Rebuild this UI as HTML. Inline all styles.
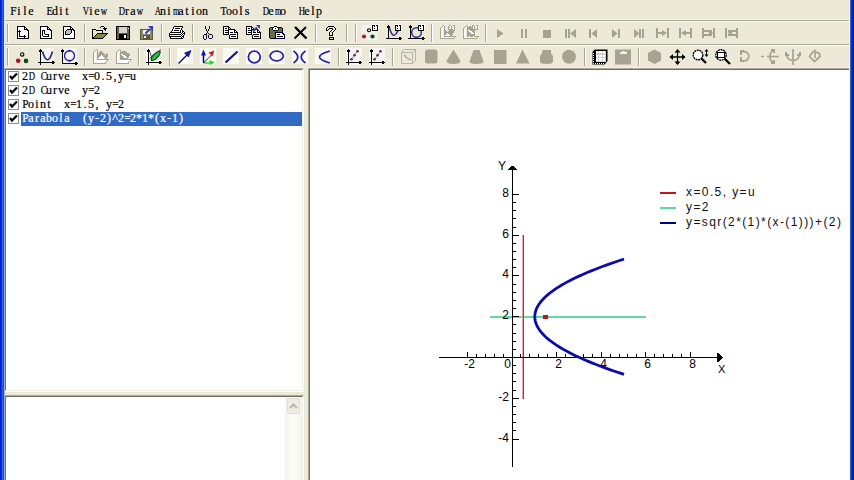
<!DOCTYPE html>
<html><head><meta charset="utf-8"><style>
*{margin:0;padding:0;box-sizing:border-box}
html,body{width:854px;height:480px;overflow:hidden;background:#ECE9D8}
.a{position:absolute}
.mi{position:absolute;top:5px;font-family:"Liberation Mono",monospace;font-size:12px;letter-spacing:-1.2px;line-height:14px;color:#000;white-space:pre}
.tt{position:absolute;font-family:"Liberation Mono",monospace;font-size:12px;letter-spacing:-1.2px;line-height:14px;white-space:pre;height:14px}
.ch{position:absolute;width:6px;text-align:center;font-family:"Liberation Serif",serif;font-size:12px;line-height:14px;white-space:pre;-webkit-text-stroke:0.2px currentColor}
.cb{position:absolute;width:11px;height:11px;border:1px solid #8E8F8F;background:#fff}
.cb svg{position:absolute;left:-1px;top:-1px}
</style></head><body>
<span class="ch" style="left:10px;top:4px;color:#000;transform:scaleX(0.944)">F</span><span class="ch" style="left:16px;top:4px;color:#000">i</span><span class="ch" style="left:22px;top:4px;color:#000">l</span><span class="ch" style="left:28px;top:4px;color:#000">e</span>
<span class="ch" style="left:46px;top:4px;color:#000;transform:scaleX(0.859)">E</span><span class="ch" style="left:52px;top:4px;color:#000">d</span><span class="ch" style="left:58px;top:4px;color:#000">i</span><span class="ch" style="left:64px;top:4px;color:#000">t</span>
<span class="ch" style="left:82px;top:4px;color:#000;transform:scaleX(0.727)">V</span><span class="ch" style="left:88px;top:4px;color:#000">i</span><span class="ch" style="left:94px;top:4px;color:#000">e</span><span class="ch" style="left:100px;top:4px;color:#000;transform:scaleX(0.727)">w</span>
<span class="ch" style="left:118px;top:4px;color:#000;transform:scaleX(0.727)">D</span><span class="ch" style="left:124px;top:4px;color:#000">r</span><span class="ch" style="left:130px;top:4px;color:#000">a</span><span class="ch" style="left:136px;top:4px;color:#000;transform:scaleX(0.727)">w</span>
<span class="ch" style="left:154px;top:4px;color:#000;transform:scaleX(0.727)">A</span><span class="ch" style="left:160px;top:4px;color:#000">n</span><span class="ch" style="left:166px;top:4px;color:#000">i</span><span class="ch" style="left:172px;top:4px;color:#000;transform:scaleX(0.675)">m</span><span class="ch" style="left:178px;top:4px;color:#000">a</span><span class="ch" style="left:184px;top:4px;color:#000">t</span><span class="ch" style="left:190px;top:4px;color:#000">i</span><span class="ch" style="left:196px;top:4px;color:#000">o</span><span class="ch" style="left:202px;top:4px;color:#000">n</span>
<span class="ch" style="left:220px;top:4px;color:#000;transform:scaleX(0.859)">T</span><span class="ch" style="left:226px;top:4px;color:#000">o</span><span class="ch" style="left:232px;top:4px;color:#000">o</span><span class="ch" style="left:238px;top:4px;color:#000">l</span><span class="ch" style="left:244px;top:4px;color:#000">s</span>
<span class="ch" style="left:262px;top:4px;color:#000;transform:scaleX(0.727)">D</span><span class="ch" style="left:268px;top:4px;color:#000">e</span><span class="ch" style="left:274px;top:4px;color:#000;transform:scaleX(0.675)">m</span><span class="ch" style="left:280px;top:4px;color:#000">o</span>
<span class="ch" style="left:298px;top:4px;color:#000;transform:scaleX(0.727)">H</span><span class="ch" style="left:304px;top:4px;color:#000">e</span><span class="ch" style="left:310px;top:4px;color:#000">l</span><span class="ch" style="left:316px;top:4px;color:#000">p</span>
<svg class="a" style="left:0;top:0" width="854" height="70" viewBox="0 0 854 70">
<rect x="4" y="19" width="846" height="1" fill="#F6F4EC"/>
<rect x="4" y="20" width="846" height="1" fill="#ACA899"/>
<rect x="4" y="21" width="846" height="1" fill="#FFFFFF"/>
<rect x="4" y="44" width="846" height="1" fill="#ACA899"/>
<rect x="4" y="45" width="846" height="1" fill="#FFFFFF"/>
<rect x="4" y="67" width="846" height="1" fill="#F3F1E8" shape-rendering="crispEdges"/>
<rect x="7" y="24" width="1" height="18" fill="#ACA899" shape-rendering="crispEdges"/><rect x="8" y="24" width="1" height="18" fill="#FFFFFF"/>
<rect x="84" y="24" width="1" height="18" fill="#ACA899" shape-rendering="crispEdges"/><rect x="85" y="24" width="1" height="18" fill="#FFFFFF"/>
<rect x="161" y="24" width="1" height="18" fill="#ACA899" shape-rendering="crispEdges"/><rect x="162" y="24" width="1" height="18" fill="#FFFFFF"/>
<rect x="192" y="24" width="1" height="18" fill="#ACA899" shape-rendering="crispEdges"/><rect x="193" y="24" width="1" height="18" fill="#FFFFFF"/>
<rect x="315" y="24" width="1" height="18" fill="#ACA899" shape-rendering="crispEdges"/><rect x="316" y="24" width="1" height="18" fill="#FFFFFF"/>
<rect x="346" y="24" width="1" height="18" fill="#ACA899" shape-rendering="crispEdges"/><rect x="347" y="24" width="1" height="18" fill="#FFFFFF"/>
<rect x="355" y="24" width="1" height="18" fill="#ACA899" shape-rendering="crispEdges"/><rect x="356" y="24" width="1" height="18" fill="#FFFFFF"/>
<rect x="431" y="24" width="1" height="18" fill="#ACA899" shape-rendering="crispEdges"/><rect x="432" y="24" width="1" height="18" fill="#FFFFFF"/>
<rect x="485" y="24" width="1" height="18" fill="#ACA899" shape-rendering="crispEdges"/><rect x="486" y="24" width="1" height="18" fill="#FFFFFF"/>
<rect x="7" y="48" width="1" height="18" fill="#ACA899" shape-rendering="crispEdges"/><rect x="8" y="48" width="1" height="18" fill="#FFFFFF"/>
<rect x="84" y="48" width="1" height="18" fill="#ACA899" shape-rendering="crispEdges"/><rect x="85" y="48" width="1" height="18" fill="#FFFFFF"/>
<rect x="138" y="48" width="1" height="18" fill="#ACA899" shape-rendering="crispEdges"/><rect x="139" y="48" width="1" height="18" fill="#FFFFFF"/>
<rect x="169" y="48" width="1" height="18" fill="#ACA899" shape-rendering="crispEdges"/><rect x="170" y="48" width="1" height="18" fill="#FFFFFF"/>
<rect x="338" y="48" width="1" height="18" fill="#ACA899" shape-rendering="crispEdges"/><rect x="339" y="48" width="1" height="18" fill="#FFFFFF"/>
<rect x="392" y="48" width="1" height="18" fill="#ACA899" shape-rendering="crispEdges"/><rect x="393" y="48" width="1" height="18" fill="#FFFFFF"/>
<rect x="584" y="48" width="1" height="18" fill="#ACA899" shape-rendering="crispEdges"/><rect x="585" y="48" width="1" height="18" fill="#FFFFFF"/>
<rect x="638" y="48" width="1" height="18" fill="#ACA899" shape-rendering="crispEdges"/><rect x="639" y="48" width="1" height="18" fill="#FFFFFF"/>
<g shape-rendering="crispEdges"><rect x="17" y="26" width="8" height="1" fill="#000"/><rect x="17" y="27" width="1" height="1" fill="#000"/><rect x="18" y="27" width="6" height="1" fill="#fff"/><rect x="24" y="27" width="2" height="1" fill="#000"/><rect x="17" y="28" width="1" height="1" fill="#000"/><rect x="18" y="28" width="6" height="1" fill="#fff"/><rect x="24" y="28" width="1" height="1" fill="#000"/><rect x="25" y="28" width="1" height="1" fill="#fff"/><rect x="26" y="28" width="1" height="1" fill="#000"/><rect x="17" y="29" width="1" height="1" fill="#000"/><rect x="18" y="29" width="6" height="1" fill="#fff"/><rect x="24" y="29" width="4" height="1" fill="#000"/><rect x="17" y="30" width="1" height="1" fill="#000"/><rect x="18" y="30" width="9" height="1" fill="#fff"/><rect x="27" y="30" width="2" height="1" fill="#000"/><rect x="17" y="31" width="1" height="1" fill="#000"/><rect x="18" y="31" width="10" height="1" fill="#fff"/><rect x="28" y="31" width="1" height="1" fill="#000"/><rect x="17" y="32" width="1" height="1" fill="#000"/><rect x="18" y="32" width="10" height="1" fill="#fff"/><rect x="28" y="32" width="1" height="1" fill="#000"/><rect x="17" y="33" width="1" height="1" fill="#000"/><rect x="18" y="33" width="10" height="1" fill="#fff"/><rect x="28" y="33" width="1" height="1" fill="#000"/><rect x="17" y="34" width="1" height="1" fill="#000"/><rect x="18" y="34" width="10" height="1" fill="#fff"/><rect x="28" y="34" width="1" height="1" fill="#000"/><rect x="17" y="35" width="1" height="1" fill="#000"/><rect x="18" y="35" width="10" height="1" fill="#fff"/><rect x="28" y="35" width="1" height="1" fill="#000"/><rect x="17" y="36" width="1" height="1" fill="#000"/><rect x="18" y="36" width="10" height="1" fill="#fff"/><rect x="28" y="36" width="1" height="1" fill="#000"/><rect x="17" y="37" width="1" height="1" fill="#000"/><rect x="18" y="37" width="10" height="1" fill="#fff"/><rect x="28" y="37" width="1" height="1" fill="#000"/><rect x="17" y="38" width="12" height="1" fill="#000"/></g>
<g shape-rendering="crispEdges"><rect x="40" y="26" width="8" height="1" fill="#000"/><rect x="40" y="27" width="1" height="1" fill="#000"/><rect x="41" y="27" width="6" height="1" fill="#fff"/><rect x="47" y="27" width="2" height="1" fill="#000"/><rect x="40" y="28" width="1" height="1" fill="#000"/><rect x="41" y="28" width="6" height="1" fill="#fff"/><rect x="47" y="28" width="1" height="1" fill="#000"/><rect x="48" y="28" width="1" height="1" fill="#fff"/><rect x="49" y="28" width="1" height="1" fill="#000"/><rect x="40" y="29" width="1" height="1" fill="#000"/><rect x="41" y="29" width="6" height="1" fill="#fff"/><rect x="47" y="29" width="4" height="1" fill="#000"/><rect x="40" y="30" width="1" height="1" fill="#000"/><rect x="41" y="30" width="9" height="1" fill="#fff"/><rect x="50" y="30" width="2" height="1" fill="#000"/><rect x="40" y="31" width="1" height="1" fill="#000"/><rect x="41" y="31" width="10" height="1" fill="#fff"/><rect x="51" y="31" width="1" height="1" fill="#000"/><rect x="40" y="32" width="1" height="1" fill="#000"/><rect x="41" y="32" width="10" height="1" fill="#fff"/><rect x="51" y="32" width="1" height="1" fill="#000"/><rect x="40" y="33" width="1" height="1" fill="#000"/><rect x="41" y="33" width="10" height="1" fill="#fff"/><rect x="51" y="33" width="1" height="1" fill="#000"/><rect x="40" y="34" width="1" height="1" fill="#000"/><rect x="41" y="34" width="10" height="1" fill="#fff"/><rect x="51" y="34" width="1" height="1" fill="#000"/><rect x="40" y="35" width="1" height="1" fill="#000"/><rect x="41" y="35" width="10" height="1" fill="#fff"/><rect x="51" y="35" width="1" height="1" fill="#000"/><rect x="40" y="36" width="1" height="1" fill="#000"/><rect x="41" y="36" width="10" height="1" fill="#fff"/><rect x="51" y="36" width="1" height="1" fill="#000"/><rect x="40" y="37" width="1" height="1" fill="#000"/><rect x="41" y="37" width="10" height="1" fill="#fff"/><rect x="51" y="37" width="1" height="1" fill="#000"/><rect x="40" y="38" width="12" height="1" fill="#000"/></g>
<g shape-rendering="crispEdges"><rect x="63" y="26" width="8" height="1" fill="#000"/><rect x="63" y="27" width="1" height="1" fill="#000"/><rect x="64" y="27" width="6" height="1" fill="#fff"/><rect x="70" y="27" width="2" height="1" fill="#000"/><rect x="63" y="28" width="1" height="1" fill="#000"/><rect x="64" y="28" width="6" height="1" fill="#fff"/><rect x="70" y="28" width="1" height="1" fill="#000"/><rect x="71" y="28" width="1" height="1" fill="#fff"/><rect x="72" y="28" width="1" height="1" fill="#000"/><rect x="63" y="29" width="1" height="1" fill="#000"/><rect x="64" y="29" width="6" height="1" fill="#fff"/><rect x="70" y="29" width="4" height="1" fill="#000"/><rect x="63" y="30" width="1" height="1" fill="#000"/><rect x="64" y="30" width="9" height="1" fill="#fff"/><rect x="73" y="30" width="2" height="1" fill="#000"/><rect x="63" y="31" width="1" height="1" fill="#000"/><rect x="64" y="31" width="10" height="1" fill="#fff"/><rect x="74" y="31" width="1" height="1" fill="#000"/><rect x="63" y="32" width="1" height="1" fill="#000"/><rect x="64" y="32" width="10" height="1" fill="#fff"/><rect x="74" y="32" width="1" height="1" fill="#000"/><rect x="63" y="33" width="1" height="1" fill="#000"/><rect x="64" y="33" width="10" height="1" fill="#fff"/><rect x="74" y="33" width="1" height="1" fill="#000"/><rect x="63" y="34" width="1" height="1" fill="#000"/><rect x="64" y="34" width="10" height="1" fill="#fff"/><rect x="74" y="34" width="1" height="1" fill="#000"/><rect x="63" y="35" width="1" height="1" fill="#000"/><rect x="64" y="35" width="10" height="1" fill="#fff"/><rect x="74" y="35" width="1" height="1" fill="#000"/><rect x="63" y="36" width="1" height="1" fill="#000"/><rect x="64" y="36" width="10" height="1" fill="#fff"/><rect x="74" y="36" width="1" height="1" fill="#000"/><rect x="63" y="37" width="1" height="1" fill="#000"/><rect x="64" y="37" width="10" height="1" fill="#fff"/><rect x="74" y="37" width="1" height="1" fill="#000"/><rect x="63" y="38" width="12" height="1" fill="#000"/></g>
<g shape-rendering="crispEdges"><rect x="19" y="30" width="1" height="1" fill="#000"/><rect x="18" y="31" width="3" height="1" fill="#000"/><rect x="19" y="32" width="1" height="1" fill="#000"/><rect x="19" y="33" width="1" height="1" fill="#000"/><rect x="19" y="34" width="1" height="1" fill="#000"/><rect x="19" y="35" width="1" height="1" fill="#000"/><rect x="24" y="35" width="1" height="1" fill="#000"/><rect x="19" y="36" width="7" height="1" fill="#000"/><rect x="24" y="37" width="1" height="1" fill="#000"/></g>
<g shape-rendering="crispEdges"><rect x="42" y="30" width="3" height="1" fill="#000"/><rect x="42" y="31" width="1" height="1" fill="#000"/><rect x="43" y="31" width="1" height="1" fill="#fff"/><rect x="44" y="31" width="1" height="1" fill="#000"/><rect x="42" y="32" width="1" height="1" fill="#000"/><rect x="43" y="32" width="1" height="1" fill="#fff"/><rect x="44" y="32" width="1" height="1" fill="#000"/><rect x="42" y="33" width="1" height="1" fill="#000"/><rect x="43" y="33" width="1" height="1" fill="#fff"/><rect x="44" y="33" width="1" height="1" fill="#000"/><rect x="42" y="34" width="1" height="1" fill="#000"/><rect x="43" y="34" width="2" height="1" fill="#fff"/><rect x="45" y="34" width="4" height="1" fill="#000"/><rect x="42" y="35" width="1" height="1" fill="#000"/><rect x="43" y="35" width="5" height="1" fill="#fff"/><rect x="48" y="35" width="1" height="1" fill="#000"/><rect x="43" y="36" width="6" height="1" fill="#000"/></g>
<g shape-rendering="crispEdges"><rect x="67" y="29" width="5" height="1" fill="#000"/><rect x="66" y="30" width="1" height="1" fill="#000"/><rect x="67" y="30" width="4" height="1" fill="#BDBDBD"/><rect x="71" y="30" width="1" height="1" fill="#000"/><rect x="65" y="31" width="1" height="1" fill="#000"/><rect x="66" y="31" width="5" height="1" fill="#BDBDBD"/><rect x="71" y="31" width="1" height="1" fill="#000"/><rect x="65" y="32" width="1" height="1" fill="#000"/><rect x="66" y="32" width="5" height="1" fill="#BDBDBD"/><rect x="71" y="32" width="1" height="1" fill="#000"/><rect x="65" y="33" width="1" height="1" fill="#000"/><rect x="66" y="33" width="4" height="1" fill="#BDBDBD"/><rect x="70" y="33" width="1" height="1" fill="#000"/><rect x="65" y="34" width="5" height="1" fill="#000"/></g>
<g shape-rendering="crispEdges"><rect x="101" y="26" width="3" height="1" fill="#000"/><rect x="100" y="27" width="1" height="1" fill="#000"/><rect x="104" y="27" width="1" height="1" fill="#000"/><rect x="103" y="28" width="4" height="1" fill="#000"/><rect x="92" y="29" width="4" height="1" fill="#000"/><rect x="104" y="29" width="2" height="1" fill="#000"/><rect x="92" y="30" width="1" height="1" fill="#000"/><rect x="93" y="30" width="3" height="1" fill="#EEF2A8"/><rect x="96" y="30" width="7" height="1" fill="#000"/><rect x="105" y="30" width="1" height="1" fill="#000"/><rect x="92" y="31" width="1" height="1" fill="#000"/><rect x="93" y="31" width="9" height="1" fill="#EEF2A8"/><rect x="102" y="31" width="1" height="1" fill="#000"/><rect x="92" y="32" width="1" height="1" fill="#000"/><rect x="93" y="32" width="9" height="1" fill="#EEF2A8"/><rect x="102" y="32" width="1" height="1" fill="#000"/><rect x="92" y="33" width="1" height="1" fill="#000"/><rect x="93" y="33" width="4" height="1" fill="#EEF2A8"/><rect x="97" y="33" width="11" height="1" fill="#000"/><rect x="92" y="34" width="1" height="1" fill="#000"/><rect x="93" y="34" width="3" height="1" fill="#EEF2A8"/><rect x="96" y="34" width="1" height="1" fill="#000"/><rect x="97" y="34" width="9" height="1" fill="#868A34"/><rect x="106" y="34" width="1" height="1" fill="#000"/><rect x="92" y="35" width="1" height="1" fill="#000"/><rect x="93" y="35" width="2" height="1" fill="#EEF2A8"/><rect x="95" y="35" width="1" height="1" fill="#000"/><rect x="96" y="35" width="9" height="1" fill="#868A34"/><rect x="105" y="35" width="1" height="1" fill="#000"/><rect x="92" y="36" width="1" height="1" fill="#000"/><rect x="93" y="36" width="1" height="1" fill="#EEF2A8"/><rect x="94" y="36" width="1" height="1" fill="#000"/><rect x="95" y="36" width="9" height="1" fill="#868A34"/><rect x="104" y="36" width="1" height="1" fill="#000"/><rect x="92" y="37" width="2" height="1" fill="#000"/><rect x="94" y="37" width="9" height="1" fill="#868A34"/><rect x="103" y="37" width="1" height="1" fill="#000"/><rect x="92" y="38" width="11" height="1" fill="#000"/></g>
<g shape-rendering="crispEdges"><rect x="116" y="26" width="14" height="14" fill="#000"/><rect x="117" y="27" width="12" height="12" fill="#60604A"/><rect x="119" y="27" width="8" height="6" fill="#D4D4CC"/><rect x="119" y="34" width="8" height="5" fill="#000"/><rect x="124" y="35" width="2" height="3" fill="#fff"/><rect x="128" y="28" width="1" height="1" fill="#fff"/></g>
<g shape-rendering="crispEdges"><rect x="140" y="29" width="13" height="11" fill="#5A5A40"/><rect x="141" y="30" width="11" height="9" fill="#8A8A68"/><rect x="143" y="30" width="7" height="4" fill="#F4F4F4"/><rect x="143" y="35" width="7" height="4" fill="#5A5A40"/><rect x="144" y="36" width="2" height="2" fill="#fff"/></g>
<path d="M145.5,33.5 L150,29" stroke="#3434B8" stroke-width="2"/><path d="M148,26 H153 V31 Z" fill="#3434B8"/>
<g shape-rendering="crispEdges"><rect x="174" y="26" width="9" height="1" fill="#000"/><rect x="173" y="27" width="1" height="1" fill="#000"/><rect x="174" y="27" width="8" height="1" fill="#FFFFFF"/><rect x="182" y="27" width="1" height="1" fill="#000"/><rect x="173" y="28" width="1" height="1" fill="#000"/><rect x="174" y="28" width="1" height="1" fill="#FFFFFF"/><rect x="175" y="28" width="5" height="1" fill="#000"/><rect x="180" y="28" width="1" height="1" fill="#FFFFFF"/><rect x="181" y="28" width="1" height="1" fill="#000"/><rect x="172" y="29" width="1" height="1" fill="#000"/><rect x="173" y="29" width="8" height="1" fill="#FFFFFF"/><rect x="181" y="29" width="1" height="1" fill="#000"/><rect x="172" y="30" width="1" height="1" fill="#000"/><rect x="173" y="30" width="1" height="1" fill="#FFFFFF"/><rect x="174" y="30" width="5" height="1" fill="#000"/><rect x="179" y="30" width="1" height="1" fill="#FFFFFF"/><rect x="180" y="30" width="1" height="1" fill="#000"/><rect x="181" y="30" width="1" height="1" fill="#FFFFFF"/><rect x="182" y="30" width="1" height="1" fill="#000"/><rect x="171" y="31" width="1" height="1" fill="#000"/><rect x="172" y="31" width="8" height="1" fill="#FFFFFF"/><rect x="180" y="31" width="1" height="1" fill="#000"/><rect x="181" y="31" width="1" height="1" fill="#FFFFFF"/><rect x="182" y="31" width="2" height="1" fill="#000"/><rect x="170" y="32" width="11" height="1" fill="#000"/><rect x="181" y="32" width="1" height="1" fill="#FFFFFF"/><rect x="182" y="32" width="1" height="1" fill="#000"/><rect x="183" y="32" width="1" height="1" fill="#FFFFFF"/><rect x="184" y="32" width="1" height="1" fill="#000"/><rect x="169" y="33" width="1" height="1" fill="#000"/><rect x="170" y="33" width="11" height="1" fill="#FFFFFF"/><rect x="181" y="33" width="1" height="1" fill="#000"/><rect x="182" y="33" width="1" height="1" fill="#FFFFFF"/><rect x="183" y="33" width="2" height="1" fill="#000"/><rect x="169" y="34" width="12" height="1" fill="#000"/><rect x="181" y="34" width="1" height="1" fill="#FFFFFF"/><rect x="182" y="34" width="1" height="1" fill="#000"/><rect x="183" y="34" width="1" height="1" fill="#FFFFFF"/><rect x="184" y="34" width="1" height="1" fill="#000"/><rect x="169" y="35" width="1" height="1" fill="#000"/><rect x="170" y="35" width="11" height="1" fill="#FFFFFF"/><rect x="181" y="35" width="1" height="1" fill="#000"/><rect x="182" y="35" width="1" height="1" fill="#FFFFFF"/><rect x="183" y="35" width="1" height="1" fill="#000"/><rect x="169" y="36" width="12" height="1" fill="#000"/><rect x="181" y="36" width="1" height="1" fill="#FFFFFF"/><rect x="182" y="36" width="2" height="1" fill="#000"/><rect x="170" y="37" width="1" height="1" fill="#000"/><rect x="171" y="37" width="10" height="1" fill="#FFFFFF"/><rect x="181" y="37" width="1" height="1" fill="#000"/><rect x="182" y="37" width="1" height="1" fill="#FFFFFF"/><rect x="183" y="37" width="1" height="1" fill="#000"/><rect x="170" y="38" width="13" height="1" fill="#000"/></g>
<g shape-rendering="crispEdges"><rect x="205" y="26" width="1" height="1" fill="#000"/><rect x="209" y="26" width="1" height="1" fill="#000"/><rect x="205" y="27" width="1" height="1" fill="#000"/><rect x="209" y="27" width="1" height="1" fill="#000"/><rect x="205" y="28" width="1" height="1" fill="#000"/><rect x="209" y="28" width="1" height="1" fill="#000"/><rect x="206" y="29" width="1" height="1" fill="#000"/><rect x="208" y="29" width="1" height="1" fill="#000"/><rect x="206" y="30" width="1" height="1" fill="#000"/><rect x="208" y="30" width="1" height="1" fill="#000"/><rect x="207" y="31" width="1" height="1" fill="#000"/><rect x="207" y="32" width="1" height="1" fill="#000"/><rect x="206" y="33" width="1" height="1" fill="#000"/><rect x="208" y="33" width="1" height="1" fill="#000"/><rect x="204" y="34" width="2" height="1" fill="#10104A"/><rect x="206" y="34" width="1" height="1" fill="#000"/><rect x="209" y="34" width="3" height="1" fill="#10104A"/><rect x="203" y="35" width="1" height="1" fill="#10104A"/><rect x="206" y="35" width="1" height="1" fill="#10104A"/><rect x="208" y="35" width="1" height="1" fill="#10104A"/><rect x="212" y="35" width="1" height="1" fill="#10104A"/><rect x="203" y="36" width="1" height="1" fill="#10104A"/><rect x="206" y="36" width="1" height="1" fill="#10104A"/><rect x="208" y="36" width="1" height="1" fill="#10104A"/><rect x="212" y="36" width="1" height="1" fill="#10104A"/><rect x="203" y="37" width="1" height="1" fill="#10104A"/><rect x="206" y="37" width="1" height="1" fill="#10104A"/><rect x="208" y="37" width="1" height="1" fill="#10104A"/><rect x="212" y="37" width="1" height="1" fill="#10104A"/><rect x="203" y="38" width="1" height="1" fill="#10104A"/><rect x="206" y="38" width="1" height="1" fill="#10104A"/><rect x="209" y="38" width="3" height="1" fill="#10104A"/><rect x="204" y="39" width="2" height="1" fill="#10104A"/></g>
<g shape-rendering="crispEdges"><rect x="223" y="26" width="6" height="1" fill="#000"/><rect x="223" y="27" width="1" height="1" fill="#000"/><rect x="224" y="27" width="4" height="1" fill="#FFFFFF"/><rect x="228" y="27" width="2" height="1" fill="#000"/><rect x="223" y="28" width="1" height="1" fill="#000"/><rect x="224" y="28" width="1" height="1" fill="#FFFFFF"/><rect x="225" y="28" width="2" height="1" fill="#000"/><rect x="227" y="28" width="1" height="1" fill="#FFFFFF"/><rect x="228" y="28" width="1" height="1" fill="#000"/><rect x="229" y="28" width="1" height="1" fill="#FFFFFF"/><rect x="230" y="28" width="1" height="1" fill="#000"/><rect x="223" y="29" width="1" height="1" fill="#000"/><rect x="224" y="29" width="4" height="1" fill="#FFFFFF"/><rect x="228" y="29" width="7" height="1" fill="#000"/><rect x="223" y="30" width="1" height="1" fill="#000"/><rect x="224" y="30" width="1" height="1" fill="#FFFFFF"/><rect x="225" y="30" width="4" height="1" fill="#000"/><rect x="229" y="30" width="5" height="1" fill="#FFFFFF"/><rect x="234" y="30" width="2" height="1" fill="#000"/><rect x="223" y="31" width="1" height="1" fill="#000"/><rect x="224" y="31" width="4" height="1" fill="#FFFFFF"/><rect x="228" y="31" width="1" height="1" fill="#000"/><rect x="229" y="31" width="5" height="1" fill="#FFFFFF"/><rect x="234" y="31" width="1" height="1" fill="#000"/><rect x="235" y="31" width="1" height="1" fill="#FFFFFF"/><rect x="236" y="31" width="1" height="1" fill="#000"/><rect x="223" y="32" width="1" height="1" fill="#000"/><rect x="224" y="32" width="1" height="1" fill="#FFFFFF"/><rect x="225" y="32" width="4" height="1" fill="#000"/><rect x="229" y="32" width="1" height="1" fill="#FFFFFF"/><rect x="230" y="32" width="3" height="1" fill="#000"/><rect x="233" y="32" width="1" height="1" fill="#FFFFFF"/><rect x="234" y="32" width="4" height="1" fill="#000"/><rect x="223" y="33" width="1" height="1" fill="#000"/><rect x="224" y="33" width="4" height="1" fill="#FFFFFF"/><rect x="228" y="33" width="1" height="1" fill="#000"/><rect x="229" y="33" width="8" height="1" fill="#FFFFFF"/><rect x="237" y="33" width="1" height="1" fill="#000"/><rect x="223" y="34" width="6" height="1" fill="#000"/><rect x="229" y="34" width="1" height="1" fill="#FFFFFF"/><rect x="230" y="34" width="6" height="1" fill="#000"/><rect x="236" y="34" width="1" height="1" fill="#FFFFFF"/><rect x="237" y="34" width="1" height="1" fill="#000"/><rect x="229" y="35" width="1" height="1" fill="#000"/><rect x="230" y="35" width="7" height="1" fill="#FFFFFF"/><rect x="237" y="35" width="1" height="1" fill="#000"/><rect x="229" y="36" width="1" height="1" fill="#000"/><rect x="230" y="36" width="1" height="1" fill="#FFFFFF"/><rect x="231" y="36" width="5" height="1" fill="#000"/><rect x="236" y="36" width="1" height="1" fill="#FFFFFF"/><rect x="237" y="36" width="1" height="1" fill="#000"/><rect x="229" y="37" width="1" height="1" fill="#000"/><rect x="230" y="37" width="7" height="1" fill="#FFFFFF"/><rect x="237" y="37" width="1" height="1" fill="#000"/><rect x="229" y="38" width="9" height="1" fill="#000"/></g>
<g shape-rendering="crispEdges"><rect x="246" y="26" width="6" height="1" fill="#000"/><rect x="246" y="27" width="1" height="1" fill="#000"/><rect x="247" y="27" width="4" height="1" fill="#FFFFFF"/><rect x="251" y="27" width="2" height="1" fill="#000"/><rect x="246" y="28" width="1" height="1" fill="#000"/><rect x="247" y="28" width="1" height="1" fill="#FFFFFF"/><rect x="248" y="28" width="2" height="1" fill="#000"/><rect x="250" y="28" width="1" height="1" fill="#FFFFFF"/><rect x="251" y="28" width="1" height="1" fill="#000"/><rect x="252" y="28" width="1" height="1" fill="#FFFFFF"/><rect x="253" y="28" width="1" height="1" fill="#000"/><rect x="246" y="29" width="1" height="1" fill="#000"/><rect x="247" y="29" width="4" height="1" fill="#FFFFFF"/><rect x="251" y="29" width="7" height="1" fill="#000"/><rect x="246" y="30" width="1" height="1" fill="#000"/><rect x="247" y="30" width="1" height="1" fill="#FFFFFF"/><rect x="248" y="30" width="4" height="1" fill="#000"/><rect x="252" y="30" width="5" height="1" fill="#FFFFFF"/><rect x="257" y="30" width="2" height="1" fill="#000"/><rect x="246" y="31" width="1" height="1" fill="#000"/><rect x="247" y="31" width="4" height="1" fill="#FFFFFF"/><rect x="251" y="31" width="1" height="1" fill="#000"/><rect x="252" y="31" width="5" height="1" fill="#FFFFFF"/><rect x="257" y="31" width="1" height="1" fill="#000"/><rect x="258" y="31" width="1" height="1" fill="#FFFFFF"/><rect x="259" y="31" width="1" height="1" fill="#000"/><rect x="246" y="32" width="1" height="1" fill="#000"/><rect x="247" y="32" width="1" height="1" fill="#FFFFFF"/><rect x="248" y="32" width="4" height="1" fill="#000"/><rect x="252" y="32" width="1" height="1" fill="#FFFFFF"/><rect x="253" y="32" width="3" height="1" fill="#000"/><rect x="256" y="32" width="1" height="1" fill="#FFFFFF"/><rect x="257" y="32" width="4" height="1" fill="#000"/><rect x="246" y="33" width="1" height="1" fill="#000"/><rect x="247" y="33" width="4" height="1" fill="#FFFFFF"/><rect x="251" y="33" width="1" height="1" fill="#000"/><rect x="252" y="33" width="8" height="1" fill="#FFFFFF"/><rect x="260" y="33" width="1" height="1" fill="#000"/><rect x="246" y="34" width="6" height="1" fill="#000"/><rect x="252" y="34" width="1" height="1" fill="#FFFFFF"/><rect x="253" y="34" width="6" height="1" fill="#000"/><rect x="259" y="34" width="1" height="1" fill="#FFFFFF"/><rect x="260" y="34" width="1" height="1" fill="#000"/><rect x="252" y="35" width="1" height="1" fill="#000"/><rect x="253" y="35" width="7" height="1" fill="#FFFFFF"/><rect x="260" y="35" width="1" height="1" fill="#000"/><rect x="252" y="36" width="1" height="1" fill="#000"/><rect x="253" y="36" width="1" height="1" fill="#FFFFFF"/><rect x="254" y="36" width="5" height="1" fill="#000"/><rect x="259" y="36" width="1" height="1" fill="#FFFFFF"/><rect x="260" y="36" width="1" height="1" fill="#000"/><rect x="252" y="37" width="1" height="1" fill="#000"/><rect x="253" y="37" width="7" height="1" fill="#FFFFFF"/><rect x="260" y="37" width="1" height="1" fill="#000"/><rect x="252" y="38" width="9" height="1" fill="#000"/></g>
<path d="M253,31.5 L257,27.5" stroke="#3A3AB0" stroke-width="2"/><path d="M256,25 H260 V29 Z" fill="#3A3AB0"/>
<g shape-rendering="crispEdges"><rect x="274" y="26" width="3" height="1" fill="#000"/><rect x="270" y="27" width="4" height="1" fill="#000"/><rect x="274" y="27" width="3" height="1" fill="#FFFFFF"/><rect x="277" y="27" width="5" height="1" fill="#000"/><rect x="269" y="28" width="1" height="1" fill="#000"/><rect x="270" y="28" width="2" height="1" fill="#6A6A4C"/><rect x="272" y="28" width="1" height="1" fill="#000"/><rect x="273" y="28" width="2" height="1" fill="#FFFFFF"/><rect x="275" y="28" width="1" height="1" fill="#000"/><rect x="276" y="28" width="2" height="1" fill="#FFFFFF"/><rect x="278" y="28" width="1" height="1" fill="#000"/><rect x="279" y="28" width="3" height="1" fill="#6A6A4C"/><rect x="282" y="28" width="1" height="1" fill="#000"/><rect x="269" y="29" width="1" height="1" fill="#000"/><rect x="270" y="29" width="2" height="1" fill="#6A6A4C"/><rect x="272" y="29" width="1" height="1" fill="#000"/><rect x="273" y="29" width="5" height="1" fill="#FFFFFF"/><rect x="278" y="29" width="1" height="1" fill="#000"/><rect x="279" y="29" width="3" height="1" fill="#6A6A4C"/><rect x="282" y="29" width="1" height="1" fill="#000"/><rect x="269" y="30" width="1" height="1" fill="#000"/><rect x="270" y="30" width="3" height="1" fill="#6A6A4C"/><rect x="273" y="30" width="5" height="1" fill="#000"/><rect x="278" y="30" width="4" height="1" fill="#6A6A4C"/><rect x="282" y="30" width="1" height="1" fill="#000"/><rect x="269" y="31" width="1" height="1" fill="#000"/><rect x="270" y="31" width="12" height="1" fill="#6A6A4C"/><rect x="282" y="31" width="1" height="1" fill="#000"/><rect x="269" y="32" width="1" height="1" fill="#000"/><rect x="270" y="32" width="5" height="1" fill="#6A6A4C"/><rect x="275" y="32" width="8" height="1" fill="#000030"/><rect x="269" y="33" width="1" height="1" fill="#000"/><rect x="270" y="33" width="5" height="1" fill="#6A6A4C"/><rect x="275" y="33" width="1" height="1" fill="#000030"/><rect x="276" y="33" width="6" height="1" fill="#FFFFFF"/><rect x="282" y="33" width="2" height="1" fill="#000030"/><rect x="269" y="34" width="1" height="1" fill="#000"/><rect x="270" y="34" width="5" height="1" fill="#6A6A4C"/><rect x="275" y="34" width="1" height="1" fill="#000030"/><rect x="276" y="34" width="1" height="1" fill="#FFFFFF"/><rect x="277" y="34" width="3" height="1" fill="#000"/><rect x="280" y="34" width="3" height="1" fill="#FFFFFF"/><rect x="283" y="34" width="2" height="1" fill="#000030"/><rect x="269" y="35" width="1" height="1" fill="#000"/><rect x="270" y="35" width="5" height="1" fill="#6A6A4C"/><rect x="275" y="35" width="1" height="1" fill="#000030"/><rect x="276" y="35" width="8" height="1" fill="#FFFFFF"/><rect x="284" y="35" width="1" height="1" fill="#000030"/><rect x="269" y="36" width="1" height="1" fill="#000"/><rect x="270" y="36" width="5" height="1" fill="#6A6A4C"/><rect x="275" y="36" width="1" height="1" fill="#000030"/><rect x="276" y="36" width="1" height="1" fill="#FFFFFF"/><rect x="277" y="36" width="6" height="1" fill="#000"/><rect x="283" y="36" width="1" height="1" fill="#FFFFFF"/><rect x="284" y="36" width="1" height="1" fill="#000030"/><rect x="269" y="37" width="1" height="1" fill="#000"/><rect x="270" y="37" width="5" height="1" fill="#6A6A4C"/><rect x="275" y="37" width="1" height="1" fill="#000030"/><rect x="276" y="37" width="8" height="1" fill="#FFFFFF"/><rect x="284" y="37" width="1" height="1" fill="#000030"/><rect x="270" y="38" width="5" height="1" fill="#000"/><rect x="275" y="38" width="10" height="1" fill="#000030"/></g>
<path d="M295,27 L306.5,38.5" stroke="#000" stroke-width="2.4"/><path d="M306,27 L294.5,38.5" stroke="#000" stroke-width="1.8"/>
<g shape-rendering="crispEdges"><rect x="328" y="26" width="6" height="1" fill="#000"/><rect x="327" y="27" width="1" height="1" fill="#000"/><rect x="328" y="27" width="6" height="1" fill="#F4F2B0"/><rect x="334" y="27" width="1" height="1" fill="#000"/><rect x="326" y="28" width="1" height="1" fill="#000"/><rect x="327" y="28" width="2" height="1" fill="#F4F2B0"/><rect x="329" y="28" width="4" height="1" fill="#000"/><rect x="333" y="28" width="2" height="1" fill="#F4F2B0"/><rect x="335" y="28" width="1" height="1" fill="#000"/><rect x="326" y="29" width="1" height="1" fill="#000"/><rect x="327" y="29" width="1" height="1" fill="#F4F2B0"/><rect x="328" y="29" width="1" height="1" fill="#000"/><rect x="332" y="29" width="1" height="1" fill="#000"/><rect x="333" y="29" width="2" height="1" fill="#F4F2B0"/><rect x="335" y="29" width="1" height="1" fill="#000"/><rect x="326" y="30" width="2" height="1" fill="#000"/><rect x="331" y="30" width="1" height="1" fill="#000"/><rect x="332" y="30" width="2" height="1" fill="#F4F2B0"/><rect x="334" y="30" width="1" height="1" fill="#000"/><rect x="330" y="31" width="1" height="1" fill="#000"/><rect x="331" y="31" width="2" height="1" fill="#F4F2B0"/><rect x="333" y="31" width="1" height="1" fill="#000"/><rect x="329" y="32" width="1" height="1" fill="#000"/><rect x="330" y="32" width="2" height="1" fill="#F4F2B0"/><rect x="332" y="32" width="1" height="1" fill="#000"/><rect x="329" y="33" width="1" height="1" fill="#000"/><rect x="330" y="33" width="2" height="1" fill="#F4F2B0"/><rect x="332" y="33" width="1" height="1" fill="#000"/><rect x="329" y="34" width="1" height="1" fill="#000"/><rect x="330" y="34" width="2" height="1" fill="#F4F2B0"/><rect x="332" y="34" width="1" height="1" fill="#000"/><rect x="329" y="35" width="4" height="1" fill="#000"/><rect x="329" y="37" width="5" height="1" fill="#000"/><rect x="329" y="38" width="1" height="1" fill="#000"/><rect x="330" y="38" width="3" height="1" fill="#F4F2B0"/><rect x="333" y="38" width="1" height="1" fill="#000"/><rect x="329" y="39" width="5" height="1" fill="#000"/></g>
<rect x="362" y="25" width="16" height="15" fill="#F2F1EA"/>
<g shape-rendering="crispEdges"><rect x="372" y="24" width="7" height="6" fill="#fff"/><g fill="#000"><rect x="372" y="25" width="1" height="6"/><rect x="372" y="30" width="6" height="1"/><rect x="373" y="25" width="2" height="1"/><rect x="374" y="26" width="1" height="1"/><rect x="374" y="28" width="1" height="1"/><rect x="376" y="25" width="2" height="1"/><rect x="377" y="25" width="1" height="5"/></g></g>
<circle cx="369" cy="30.3" r="1.5" fill="none" stroke="#000" stroke-width="1.1"/><circle cx="364" cy="36.5" r="2.1" fill="#B01828"/><circle cx="372.5" cy="36.5" r="2.1" fill="#104820"/>
<g shape-rendering="crispEdges" fill="#000"><rect x="388" y="25" width="1" height="14"/><rect x="387" y="26" width="3" height="2"/><rect x="386" y="38" width="16" height="1"/><rect x="399" y="37" width="2" height="3"/></g>
<path d="M389.5,28 Q393.5,42 398.5,29" fill="none" stroke="#303090" stroke-width="1.6"/>
<g shape-rendering="crispEdges"><rect x="395" y="24" width="7" height="6" fill="#fff"/><g fill="#000"><rect x="395" y="25" width="1" height="6"/><rect x="395" y="30" width="6" height="1"/><rect x="396" y="25" width="2" height="1"/><rect x="397" y="26" width="1" height="1"/><rect x="397" y="28" width="1" height="1"/><rect x="399" y="25" width="2" height="1"/><rect x="400" y="25" width="1" height="5"/></g></g>
<g shape-rendering="crispEdges" fill="#000"><rect x="410" y="25" width="1" height="14"/><rect x="409" y="26" width="3" height="2"/><rect x="408" y="38" width="17" height="1"/><rect x="422" y="37" width="2" height="3"/></g>
<circle cx="416.5" cy="32.5" r="4.8" fill="none" stroke="#303098" stroke-width="1.5"/>
<g shape-rendering="crispEdges"><rect x="418" y="24" width="7" height="6" fill="#fff"/><g fill="#000"><rect x="418" y="25" width="1" height="6"/><rect x="418" y="30" width="6" height="1"/><rect x="419" y="25" width="2" height="1"/><rect x="420" y="26" width="1" height="1"/><rect x="420" y="28" width="1" height="1"/><rect x="422" y="25" width="2" height="1"/><rect x="423" y="25" width="1" height="5"/></g></g>
<g shape-rendering="crispEdges"><rect x="443" y="25" width="1" height="1" fill="#A6A393"/><rect x="449" y="25" width="2" height="1" fill="#A6A393"/><rect x="453" y="25" width="2" height="1" fill="#A6A393"/><rect x="442" y="26" width="1" height="1" fill="#A6A393"/><rect x="443" y="26" width="1" height="1" fill="#FFFFFF"/><rect x="444" y="26" width="1" height="1" fill="#A6A393"/><rect x="448" y="26" width="1" height="1" fill="#A6A393"/><rect x="449" y="26" width="2" height="1" fill="#FFFFFF"/><rect x="451" y="26" width="1" height="1" fill="#A6A393"/><rect x="453" y="26" width="1" height="1" fill="#FFFFFF"/><rect x="454" y="26" width="1" height="1" fill="#A6A393"/><rect x="441" y="27" width="1" height="1" fill="#A6A393"/><rect x="442" y="27" width="2" height="1" fill="#FFFFFF"/><rect x="444" y="27" width="1" height="1" fill="#A6A393"/><rect x="448" y="27" width="2" height="1" fill="#A6A393"/><rect x="450" y="27" width="1" height="1" fill="#FFFFFF"/><rect x="451" y="27" width="1" height="1" fill="#A6A393"/><rect x="453" y="27" width="1" height="1" fill="#FFFFFF"/><rect x="454" y="27" width="1" height="1" fill="#A6A393"/><rect x="440" y="28" width="1" height="1" fill="#A6A393"/><rect x="441" y="28" width="2" height="1" fill="#FFFFFF"/><rect x="444" y="28" width="1" height="1" fill="#A6A393"/><rect x="448" y="28" width="1" height="1" fill="#A6A393"/><rect x="449" y="28" width="2" height="1" fill="#FFFFFF"/><rect x="451" y="28" width="1" height="1" fill="#A6A393"/><rect x="453" y="28" width="1" height="1" fill="#FFFFFF"/><rect x="454" y="28" width="1" height="1" fill="#A6A393"/><rect x="440" y="29" width="1" height="1" fill="#A6A393"/><rect x="441" y="29" width="2" height="1" fill="#FFFFFF"/><rect x="444" y="29" width="1" height="1" fill="#A6A393"/><rect x="448" y="29" width="5" height="1" fill="#A6A393"/><rect x="453" y="29" width="1" height="1" fill="#FFFFFF"/><rect x="454" y="29" width="1" height="1" fill="#A6A393"/><rect x="440" y="30" width="1" height="1" fill="#A6A393"/><rect x="441" y="30" width="2" height="1" fill="#FFFFFF"/><rect x="444" y="30" width="2" height="1" fill="#A6A393"/><rect x="449" y="30" width="6" height="1" fill="#A6A393"/><rect x="440" y="31" width="1" height="1" fill="#A6A393"/><rect x="441" y="31" width="2" height="1" fill="#FFFFFF"/><rect x="444" y="31" width="3" height="1" fill="#A6A393"/><rect x="448" y="31" width="6" height="1" fill="#A6A393"/><rect x="440" y="32" width="1" height="1" fill="#A6A393"/><rect x="441" y="32" width="2" height="1" fill="#FFFFFF"/><rect x="444" y="32" width="10" height="1" fill="#A6A393"/><rect x="440" y="33" width="1" height="1" fill="#A6A393"/><rect x="441" y="33" width="2" height="1" fill="#FFFFFF"/><rect x="444" y="33" width="3" height="1" fill="#A6A393"/><rect x="447" y="33" width="1" height="1" fill="#FFFFFF"/><rect x="448" y="33" width="5" height="1" fill="#A6A393"/><rect x="453" y="33" width="1" height="1" fill="#FFFFFF"/><rect x="440" y="34" width="1" height="1" fill="#A6A393"/><rect x="441" y="34" width="2" height="1" fill="#FFFFFF"/><rect x="444" y="34" width="2" height="1" fill="#A6A393"/><rect x="446" y="34" width="3" height="1" fill="#FFFFFF"/><rect x="449" y="34" width="4" height="1" fill="#A6A393"/><rect x="453" y="34" width="1" height="1" fill="#FFFFFF"/><rect x="440" y="35" width="1" height="1" fill="#A6A393"/><rect x="441" y="35" width="2" height="1" fill="#FFFFFF"/><rect x="444" y="35" width="1" height="1" fill="#A6A393"/><rect x="445" y="35" width="5" height="1" fill="#FFFFFF"/><rect x="450" y="35" width="2" height="1" fill="#A6A393"/><rect x="452" y="35" width="1" height="1" fill="#FFFFFF"/><rect x="440" y="36" width="1" height="1" fill="#A6A393"/><rect x="441" y="36" width="2" height="1" fill="#FFFFFF"/><rect x="444" y="36" width="12" height="1" fill="#A6A393"/><rect x="440" y="37" width="1" height="1" fill="#A6A393"/><rect x="441" y="37" width="13" height="1" fill="#FFFFFF"/><rect x="454" y="37" width="1" height="1" fill="#A6A393"/><rect x="440" y="38" width="14" height="1" fill="#A6A393"/></g>
<g shape-rendering="crispEdges"><rect x="466" y="25" width="1" height="1" fill="#A6A393"/><rect x="472" y="25" width="2" height="1" fill="#A6A393"/><rect x="476" y="25" width="2" height="1" fill="#A6A393"/><rect x="465" y="26" width="1" height="1" fill="#A6A393"/><rect x="466" y="26" width="1" height="1" fill="#FFFFFF"/><rect x="467" y="26" width="1" height="1" fill="#A6A393"/><rect x="469" y="26" width="2" height="1" fill="#A6A393"/><rect x="472" y="26" width="1" height="1" fill="#A6A393"/><rect x="473" y="26" width="1" height="1" fill="#FFFFFF"/><rect x="474" y="26" width="1" height="1" fill="#A6A393"/><rect x="476" y="26" width="1" height="1" fill="#FFFFFF"/><rect x="477" y="26" width="1" height="1" fill="#A6A393"/><rect x="464" y="27" width="1" height="1" fill="#A6A393"/><rect x="465" y="27" width="2" height="1" fill="#FFFFFF"/><rect x="467" y="27" width="6" height="1" fill="#A6A393"/><rect x="473" y="27" width="1" height="1" fill="#FFFFFF"/><rect x="474" y="27" width="1" height="1" fill="#A6A393"/><rect x="476" y="27" width="1" height="1" fill="#FFFFFF"/><rect x="477" y="27" width="1" height="1" fill="#A6A393"/><rect x="463" y="28" width="1" height="1" fill="#A6A393"/><rect x="464" y="28" width="2" height="1" fill="#FFFFFF"/><rect x="467" y="28" width="6" height="1" fill="#A6A393"/><rect x="473" y="28" width="1" height="1" fill="#FFFFFF"/><rect x="474" y="28" width="1" height="1" fill="#A6A393"/><rect x="476" y="28" width="1" height="1" fill="#FFFFFF"/><rect x="477" y="28" width="1" height="1" fill="#A6A393"/><rect x="463" y="29" width="1" height="1" fill="#A6A393"/><rect x="464" y="29" width="2" height="1" fill="#FFFFFF"/><rect x="467" y="29" width="11" height="1" fill="#A6A393"/><rect x="463" y="30" width="1" height="1" fill="#A6A393"/><rect x="464" y="30" width="2" height="1" fill="#FFFFFF"/><rect x="467" y="30" width="1" height="1" fill="#A6A393"/><rect x="468" y="30" width="2" height="1" fill="#FFFFFF"/><rect x="470" y="30" width="5" height="1" fill="#A6A393"/><rect x="463" y="31" width="1" height="1" fill="#A6A393"/><rect x="464" y="31" width="2" height="1" fill="#FFFFFF"/><rect x="467" y="31" width="2" height="1" fill="#A6A393"/><rect x="469" y="31" width="3" height="1" fill="#FFFFFF"/><rect x="472" y="31" width="3" height="1" fill="#A6A393"/><rect x="463" y="32" width="1" height="1" fill="#A6A393"/><rect x="464" y="32" width="2" height="1" fill="#FFFFFF"/><rect x="467" y="32" width="3" height="1" fill="#A6A393"/><rect x="470" y="32" width="3" height="1" fill="#FFFFFF"/><rect x="473" y="32" width="2" height="1" fill="#A6A393"/><rect x="475" y="32" width="1" height="1" fill="#FFFFFF"/><rect x="463" y="33" width="1" height="1" fill="#A6A393"/><rect x="464" y="33" width="2" height="1" fill="#FFFFFF"/><rect x="467" y="33" width="4" height="1" fill="#A6A393"/><rect x="471" y="33" width="3" height="1" fill="#FFFFFF"/><rect x="474" y="33" width="1" height="1" fill="#A6A393"/><rect x="475" y="33" width="1" height="1" fill="#FFFFFF"/><rect x="463" y="34" width="1" height="1" fill="#A6A393"/><rect x="464" y="34" width="2" height="1" fill="#FFFFFF"/><rect x="467" y="34" width="8" height="1" fill="#A6A393"/><rect x="475" y="34" width="1" height="1" fill="#FFFFFF"/><rect x="463" y="35" width="1" height="1" fill="#A6A393"/><rect x="464" y="35" width="2" height="1" fill="#FFFFFF"/><rect x="467" y="35" width="8" height="1" fill="#A6A393"/><rect x="475" y="35" width="1" height="1" fill="#FFFFFF"/><rect x="463" y="36" width="1" height="1" fill="#A6A393"/><rect x="464" y="36" width="2" height="1" fill="#FFFFFF"/><rect x="467" y="36" width="2" height="1" fill="#A6A393"/><rect x="469" y="36" width="1" height="1" fill="#FFFFFF"/><rect x="470" y="36" width="3" height="1" fill="#A6A393"/><rect x="473" y="36" width="1" height="1" fill="#FFFFFF"/><rect x="474" y="36" width="5" height="1" fill="#A6A393"/><rect x="463" y="37" width="1" height="1" fill="#A6A393"/><rect x="464" y="37" width="13" height="1" fill="#FFFFFF"/><rect x="477" y="37" width="1" height="1" fill="#A6A393"/><rect x="463" y="38" width="14" height="1" fill="#A6A393"/></g>
<g fill="#A6A393" shape-rendering="crispEdges"><rect x="521" y="29" width="2" height="9"/><rect x="525" y="29" width="2" height="9"/><rect x="543" y="30" width="8" height="8"/><rect x="565" y="29" width="2" height="9"/><rect x="568" y="29" width="2" height="9"/><rect x="589" y="29" width="2" height="9"/><rect x="618" y="29" width="2" height="9"/><rect x="639" y="29" width="2" height="9"/><rect x="642" y="29" width="2" height="9"/><rect x="656" y="28" width="2" height="10"/><rect x="667" y="28" width="2" height="10"/><rect x="658" y="32" width="8" height="2"/><rect x="679" y="28" width="2" height="10"/><rect x="690" y="28" width="2" height="10"/><rect x="682" y="32" width="8" height="2"/><rect x="702" y="28" width="2" height="10"/><rect x="713" y="28" width="2" height="10"/><rect x="704" y="30" width="8" height="2"/><rect x="704" y="34" width="8" height="2"/><rect x="725" y="28" width="2" height="10"/><rect x="736" y="28" width="2" height="10"/><rect x="728" y="30" width="8" height="2"/><rect x="728" y="34" width="8" height="2"/></g>
<g fill="#A6A393"><path d="M497,29 L503.5,33.5 L497,38 Z"/><path d="M576,29 L570,33.5 L576,38 Z"/><path d="M597,29 L591.5,33.5 L597,38 Z"/><path d="M612,29 L617.5,33.5 L612,38 Z"/><path d="M634,29 L639.5,33.5 L634,38 Z"/><path d="M662,30 L667,33 L662,36 Z"/><path d="M686,30 L681,33 L686,36 Z"/><path d="M709,29.5 L713,33 L709,36.5 Z"/><path d="M732,29.5 L728,33 L732,36.5 Z"/></g>
<circle cx="22.2" cy="54.4" r="1.7" fill="none" stroke="#000" stroke-width="1.1"/><circle cx="18.2" cy="60.7" r="2.3" fill="#B01020"/><circle cx="26" cy="60.9" r="2.3" fill="#0E4A1E"/>
<rect x="41" y="48" width="13" height="14" fill="#F5F4F0"/>
<g shape-rendering="crispEdges" fill="#000"><rect x="40" y="49" width="1" height="16"/><rect x="39" y="50" width="3" height="2"/><rect x="38" y="62" width="17" height="1"/><rect x="52" y="61" width="2" height="3"/></g>
<path d="M42.5,51.5 Q47.5,68 52.5,51.5" fill="none" stroke="#2A2A88" stroke-width="1.7"/>
<rect x="63" y="48" width="14" height="15" fill="#F5F4F0"/>
<g shape-rendering="crispEdges" fill="#000"><rect x="62" y="49" width="1" height="15"/><rect x="61" y="50" width="3" height="2"/><rect x="62" y="63" width="16" height="1"/><rect x="75" y="62" width="2" height="3"/></g>
<circle cx="69.5" cy="55.7" r="5" fill="none" stroke="#2828A0" stroke-width="1.4"/><circle cx="69.5" cy="50.7" r="1" fill="#1010A0"/><circle cx="69.5" cy="60.7" r="1" fill="#1010A0"/>
<g shape-rendering="crispEdges"><rect x="96" y="49" width="1" height="1" fill="#A6A393"/><rect x="95" y="50" width="1" height="1" fill="#A6A393"/><rect x="96" y="50" width="1" height="1" fill="#FFFFFF"/><rect x="97" y="50" width="1" height="1" fill="#A6A393"/><rect x="94" y="51" width="1" height="1" fill="#A6A393"/><rect x="95" y="51" width="2" height="1" fill="#FFFFFF"/><rect x="97" y="51" width="1" height="1" fill="#A6A393"/><rect x="100" y="51" width="2" height="1" fill="#A6A393"/><rect x="93" y="52" width="1" height="1" fill="#A6A393"/><rect x="94" y="52" width="2" height="1" fill="#FFFFFF"/><rect x="97" y="52" width="1" height="1" fill="#A6A393"/><rect x="99" y="52" width="4" height="1" fill="#A6A393"/><rect x="93" y="53" width="1" height="1" fill="#A6A393"/><rect x="94" y="53" width="2" height="1" fill="#FFFFFF"/><rect x="97" y="53" width="1" height="1" fill="#A6A393"/><rect x="99" y="53" width="5" height="1" fill="#A6A393"/><rect x="106" y="53" width="1" height="1" fill="#A6A393"/><rect x="93" y="54" width="1" height="1" fill="#A6A393"/><rect x="94" y="54" width="2" height="1" fill="#FFFFFF"/><rect x="97" y="54" width="8" height="1" fill="#A6A393"/><rect x="106" y="54" width="2" height="1" fill="#A6A393"/><rect x="93" y="55" width="1" height="1" fill="#A6A393"/><rect x="94" y="55" width="2" height="1" fill="#FFFFFF"/><rect x="97" y="55" width="4" height="1" fill="#A6A393"/><rect x="101" y="55" width="1" height="1" fill="#FFFFFF"/><rect x="102" y="55" width="6" height="1" fill="#A6A393"/><rect x="93" y="56" width="1" height="1" fill="#A6A393"/><rect x="94" y="56" width="2" height="1" fill="#FFFFFF"/><rect x="97" y="56" width="3" height="1" fill="#A6A393"/><rect x="100" y="56" width="3" height="1" fill="#FFFFFF"/><rect x="103" y="56" width="5" height="1" fill="#A6A393"/><rect x="93" y="57" width="1" height="1" fill="#A6A393"/><rect x="94" y="57" width="2" height="1" fill="#FFFFFF"/><rect x="97" y="57" width="2" height="1" fill="#A6A393"/><rect x="99" y="57" width="5" height="1" fill="#FFFFFF"/><rect x="104" y="57" width="3" height="1" fill="#A6A393"/><rect x="93" y="58" width="1" height="1" fill="#A6A393"/><rect x="94" y="58" width="2" height="1" fill="#FFFFFF"/><rect x="97" y="58" width="1" height="1" fill="#A6A393"/><rect x="98" y="58" width="7" height="1" fill="#FFFFFF"/><rect x="105" y="58" width="2" height="1" fill="#A6A393"/><rect x="93" y="59" width="1" height="1" fill="#A6A393"/><rect x="94" y="59" width="2" height="1" fill="#FFFFFF"/><rect x="97" y="59" width="12" height="1" fill="#A6A393"/><rect x="93" y="60" width="1" height="1" fill="#A6A393"/><rect x="94" y="60" width="13" height="1" fill="#FFFFFF"/><rect x="107" y="60" width="1" height="1" fill="#A6A393"/><rect x="93" y="61" width="1" height="1" fill="#A6A393"/><rect x="94" y="61" width="12" height="1" fill="#FFFFFF"/><rect x="106" y="61" width="1" height="1" fill="#A6A393"/><rect x="93" y="62" width="1" height="1" fill="#A6A393"/><rect x="94" y="62" width="11" height="1" fill="#FFFFFF"/><rect x="105" y="62" width="1" height="1" fill="#A6A393"/><rect x="93" y="63" width="13" height="1" fill="#A6A393"/></g>
<g shape-rendering="crispEdges"><rect x="119" y="49" width="1" height="1" fill="#A6A393"/><rect x="118" y="50" width="1" height="1" fill="#A6A393"/><rect x="119" y="50" width="1" height="1" fill="#FFFFFF"/><rect x="120" y="50" width="1" height="1" fill="#A6A393"/><rect x="117" y="51" width="1" height="1" fill="#A6A393"/><rect x="118" y="51" width="2" height="1" fill="#FFFFFF"/><rect x="120" y="51" width="1" height="1" fill="#A6A393"/><rect x="122" y="51" width="4" height="1" fill="#A6A393"/><rect x="116" y="52" width="1" height="1" fill="#A6A393"/><rect x="117" y="52" width="2" height="1" fill="#FFFFFF"/><rect x="120" y="52" width="7" height="1" fill="#A6A393"/><rect x="116" y="53" width="1" height="1" fill="#A6A393"/><rect x="117" y="53" width="2" height="1" fill="#FFFFFF"/><rect x="120" y="53" width="9" height="1" fill="#A6A393"/><rect x="116" y="54" width="1" height="1" fill="#A6A393"/><rect x="117" y="54" width="2" height="1" fill="#FFFFFF"/><rect x="120" y="54" width="1" height="1" fill="#A6A393"/><rect x="121" y="54" width="2" height="1" fill="#FFFFFF"/><rect x="123" y="54" width="7" height="1" fill="#A6A393"/><rect x="116" y="55" width="1" height="1" fill="#A6A393"/><rect x="117" y="55" width="2" height="1" fill="#FFFFFF"/><rect x="120" y="55" width="2" height="1" fill="#A6A393"/><rect x="122" y="55" width="3" height="1" fill="#FFFFFF"/><rect x="125" y="55" width="5" height="1" fill="#A6A393"/><rect x="116" y="56" width="1" height="1" fill="#A6A393"/><rect x="117" y="56" width="2" height="1" fill="#FFFFFF"/><rect x="120" y="56" width="3" height="1" fill="#A6A393"/><rect x="123" y="56" width="3" height="1" fill="#FFFFFF"/><rect x="126" y="56" width="3" height="1" fill="#A6A393"/><rect x="129" y="56" width="1" height="1" fill="#FFFFFF"/><rect x="116" y="57" width="1" height="1" fill="#A6A393"/><rect x="117" y="57" width="2" height="1" fill="#FFFFFF"/><rect x="120" y="57" width="4" height="1" fill="#A6A393"/><rect x="124" y="57" width="3" height="1" fill="#FFFFFF"/><rect x="127" y="57" width="2" height="1" fill="#A6A393"/><rect x="129" y="57" width="1" height="1" fill="#FFFFFF"/><rect x="116" y="58" width="1" height="1" fill="#A6A393"/><rect x="117" y="58" width="2" height="1" fill="#FFFFFF"/><rect x="120" y="58" width="8" height="1" fill="#A6A393"/><rect x="128" y="58" width="1" height="1" fill="#FFFFFF"/><rect x="116" y="59" width="1" height="1" fill="#A6A393"/><rect x="117" y="59" width="2" height="1" fill="#FFFFFF"/><rect x="120" y="59" width="12" height="1" fill="#A6A393"/><rect x="116" y="60" width="1" height="1" fill="#A6A393"/><rect x="117" y="60" width="13" height="1" fill="#FFFFFF"/><rect x="130" y="60" width="1" height="1" fill="#A6A393"/><rect x="116" y="61" width="1" height="1" fill="#A6A393"/><rect x="117" y="61" width="12" height="1" fill="#FFFFFF"/><rect x="129" y="61" width="1" height="1" fill="#A6A393"/><rect x="116" y="62" width="1" height="1" fill="#A6A393"/><rect x="117" y="62" width="11" height="1" fill="#FFFFFF"/><rect x="128" y="62" width="1" height="1" fill="#A6A393"/><rect x="116" y="63" width="13" height="1" fill="#A6A393"/></g>
<rect x="146" y="48" width="16" height="17" fill="#F6F5EE"/>
<g shape-rendering="crispEdges" fill="#000"><rect x="148" y="49" width="1" height="16"/><rect x="147" y="50" width="3" height="2"/><rect x="146" y="62" width="16" height="1"/><rect x="159" y="61" width="2" height="3"/></g>
<path d="M149.5,58.5 L161,49" stroke="#D04090" stroke-width="1"/><path d="M150,52 L152,59" stroke="#7040A0" stroke-width="1"/>
<path d="M151.5,60.5 C150,57 156,51.5 160,51 C161,54 156,61 151.5,60.5 Z" fill="#22C040" stroke="#003A10" stroke-width="1.1"/>
<rect x="177" y="48" width="16" height="16" fill="#FBFBF4"/>
<path d="M178.5,63.5 L187,55" stroke="#000070" stroke-width="1.3"/><path d="M191,50.5 L184.5,53 L188.5,57 Z" fill="#1414B0" stroke="#000070" stroke-width="0.6"/>
<rect x="200" y="48" width="16" height="16" fill="#FBFBF4"/>
<path d="M203.5,63 L212,54.5" stroke="#303030" stroke-width="1"/><path d="M203.5,63 H211" stroke="#20B030" stroke-width="1.2"/><path d="M203.5,63 V54" stroke="#000090" stroke-width="1.5"/>
<path d="M203.5,49.5 L201,55.5 H206 Z" fill="#1010C0"/><path d="M214.5,50.5 L208.5,52.5 L212.5,56.5 Z" fill="#D02020"/><path d="M215,62.5 L209.5,60 V65 Z" fill="#30D040"/>
<rect x="223" y="48" width="16" height="16" fill="#FBFBF4"/>
<path d="M225.5,62.5 L237.5,51.5" stroke="#14148A" stroke-width="2.3"/>
<rect x="246" y="48" width="16" height="16" fill="#FBFBF4"/>
<circle cx="254.3" cy="57" r="5.9" fill="none" stroke="#2424A8" stroke-width="1.8"/>
<rect x="269" y="48" width="16" height="16" fill="#FBFBF4"/>
<ellipse cx="276.7" cy="56" rx="6.6" ry="4.8" fill="none" stroke="#2424A8" stroke-width="1.8"/>
<rect x="292" y="48" width="16" height="16" fill="#FBFBF4"/>
<path d="M293.5,51 Q302,57 293.5,63 M305.5,51 Q297,57 305.5,63" fill="none" stroke="#2424A8" stroke-width="1.8"/>
<rect x="315" y="48" width="16" height="16" fill="#FBFBF4"/>
<path d="M330,51 Q309,57 330,63" fill="none" stroke="#2424A8" stroke-width="1.8"/>
<rect x="346" y="48" width="16" height="17" fill="#F6F4F4"/>
<g shape-rendering="crispEdges" fill="#000"><rect x="348" y="49" width="1" height="16"/><rect x="347" y="50" width="3" height="2"/><rect x="346" y="62" width="16" height="1"/><rect x="359" y="61" width="2" height="3"/></g>
<path d="M351.5,59.5 L357.5,51" stroke="#602848" stroke-width="1" stroke-dasharray="1.2,1.2"/>
<circle cx="351.5" cy="59.3" r="1.3" fill="#602848"/><circle cx="354.5" cy="55.2" r="1.3" fill="#602848"/><circle cx="357.5" cy="51.2" r="1.3" fill="#602848"/>
<rect x="369" y="48" width="16" height="17" fill="#F6F4F4"/>
<g shape-rendering="crispEdges" fill="#000"><rect x="371" y="49" width="1" height="16"/><rect x="370" y="50" width="3" height="2"/><rect x="369" y="62" width="16" height="1"/><rect x="382" y="61" width="2" height="3"/></g>
<path d="M374.5,59.5 L380.5,51" stroke="#602848" stroke-width="1" stroke-dasharray="1.2,1.2"/>
<circle cx="374.5" cy="59.3" r="1.3" fill="#602848"/><circle cx="377.5" cy="55.2" r="1.3" fill="#602848"/><circle cx="380.5" cy="51.2" r="1.3" fill="#602848"/>
<path d="M401.5,52.5 L404.5,49.5 H415.5 V60.5 L412.5,63.5 H401.5 Z M401.5,52.5 H412.5 V63.5 M412.5,52.5 L415.5,49.5" fill="none" stroke="#B8B5A6" stroke-width="1"/>
<path d="M404,55 L407,58 L411,60" fill="none" stroke="#A6A393" stroke-width="1.3"/>
<rect x="425" y="49.5" width="12.5" height="14" rx="2.5" fill="#A6A393"/>
<path d="M453.5,49.5 L460.5,61 Q460.5,64 453.5,64 Q446.5,64 446.5,61 Z" fill="#A6A393"/>
<path d="M473.5,50 H479.5 L483.5,61.5 Q483.5,64 476.5,64 Q469.5,64 469.5,61.5 Z" fill="#A6A393"/>
<rect x="494" y="50" width="12.5" height="14" fill="#A6A393"/>
<path d="M522.5,49.5 L529.5,63.5 H516 Z" fill="#A6A393"/>
<path d="M542.5,50 H551 L551,53 L553,56 V61.5 Q553,64 546.5,64 Q540,64 540,61.5 V56 L542,53 Z" fill="#A6A393"/>
<circle cx="569" cy="56.8" r="7" fill="#A6A393"/>
<path d="M594.5,49.5 H607.5 V61 L604.5,64.5 H592.5 V52 Z" fill="#000"/>
<rect x="596" y="51" width="10" height="11" fill="#D6D4CC"/>
<g shape-rendering="crispEdges" fill="#fff"><rect x="596.0" y="51.0" width="2.2" height="2.4"/><rect x="596.0" y="54.6" width="2.2" height="2.4"/><rect x="596.0" y="58.2" width="2.2" height="2.4"/><rect x="599.4" y="51.0" width="2.2" height="2.4"/><rect x="599.4" y="54.6" width="2.2" height="2.4"/><rect x="599.4" y="58.2" width="2.2" height="2.4"/><rect x="602.8" y="51.0" width="2.2" height="2.4"/><rect x="602.8" y="54.6" width="2.2" height="2.4"/><rect x="602.8" y="58.2" width="2.2" height="2.4"/></g>
<path d="M593.5,53 V63.5 H604" fill="none" stroke="#fff" stroke-width="1" stroke-dasharray="1,1"/>
<rect x="615" y="49.5" width="16" height="15" fill="#A6A393"/><g shape-rendering="crispEdges" fill="#F4F2EA"><rect x="622" y="51" width="3" height="1"/><rect x="620" y="52" width="7" height="2"/></g>
<path d="M654.5,49.5 L661,53 V60.5 L654.5,64 L648,60.5 V53 Z" fill="#A6A393"/>
<path d="M677.5,50 V64 M670.5,57 H684.5" stroke="#000" stroke-width="1.3"/>
<path d="M677.5,49 L674.5,52.5 H680.5 Z M677.5,65 L674.5,61.5 H680.5 Z M669.5,57 L673,54 V60 Z M685.5,57 L682,54 V60 Z" fill="#000"/>
<circle cx="698" cy="55" r="4.8" fill="#fff" stroke="#000" stroke-width="1.4" stroke-dasharray="2,0.6"/><path d="M701.5,58.5 L706,63" stroke="#000" stroke-width="2.2"/>
<path d="M706.5,50 V56" stroke="#000" stroke-width="1"/><path d="M706.5,49 L704.5,51.5 H708.5 Z M706.5,57 L704.5,54.5 H708.5 Z" fill="#000"/>
<circle cx="721" cy="55" r="5.2" fill="#fff" stroke="#000" stroke-width="1.4" stroke-dasharray="2,0.6"/><rect x="717.5" y="52.5" width="7" height="5" fill="none" stroke="#000" stroke-width="1"/><path d="M724.5,58.5 L730,64" stroke="#000" stroke-width="2.2"/>
<g fill="none" stroke="#A6A393" stroke-width="1.7"><path d="M742.5,52 A4.6,4.6 0 1 1 742.5,60.5"/><path d="M761,56.5 H764 M767,56.5 H779 M772.5,50.5 Q767,56.5 772.5,62.5"/><path d="M793,49 V65 M786.5,54 Q787,60.5 793,60.5 Q799,60.5 799.5,54"/><path d="M813.5,51 L809.5,56.5 L814.5,61.5 L820,56.5 Q820,52 815.5,52.5 M815,49.5 V58"/></g>
<g fill="#A6A393" shape-rendering="crispEdges"><rect x="740" y="50" width="4" height="2"/><rect x="740" y="52" width="2" height="3"/><rect x="740" y="60" width="4" height="2"/><rect x="740" y="57" width="2" height="3"/><rect x="771" y="49" width="3" height="2"/><rect x="773" y="49" width="2" height="4"/><rect x="771" y="62" width="3" height="2"/><rect x="773" y="60" width="2" height="4"/><rect x="785" y="52" width="2" height="3"/><rect x="785" y="54" width="4" height="2"/><rect x="799" y="52" width="2" height="3"/><rect x="797" y="54" width="4" height="2"/></g>
</svg>
<!-- left top pane -->
<div class="a" style="left:4px;top:68px;width:300px;height:324px;border-top:1px solid #ACA899;border-left:1px solid #ACA899;border-right:1px solid #fff;border-bottom:1px solid #fff"></div>
<div class="a" style="left:5px;top:69px;width:298px;height:322px;border-top:1px solid #716F64;border-left:1px solid #716F64;border-right:1px solid #F1EFE2;border-bottom:1px solid #F1EFE2;background:#fff"></div>
<div class="cb" style="left:8px;top:71px"><svg width="11" height="11" viewBox="0 0 11 11"><path d="M2,5 L4,7.5 L9,2.5" fill="none" stroke="#000" stroke-width="2.2"/></svg></div>
<span class="ch" style="left:22px;top:69px;color:#000">2</span><span class="ch" style="left:28px;top:69px;color:#000;transform:scaleX(0.727)">D</span><span class="ch" style="left:40px;top:69px;color:#000;transform:scaleX(0.787)">C</span><span class="ch" style="left:46px;top:69px;color:#000">u</span><span class="ch" style="left:52px;top:69px;color:#000">r</span><span class="ch" style="left:58px;top:69px;color:#000">v</span><span class="ch" style="left:64px;top:69px;color:#000">e</span><span class="ch" style="left:82px;top:69px;color:#000">x</span><span class="ch" style="left:88px;top:69px;color:#000;transform:scaleX(0.931)">=</span><span class="ch" style="left:94px;top:69px;color:#000">0</span><span class="ch" style="left:100px;top:69px;color:#000">.</span><span class="ch" style="left:106px;top:69px;color:#000">5</span><span class="ch" style="left:112px;top:69px;color:#000">,</span><span class="ch" style="left:118px;top:69px;color:#000">y</span><span class="ch" style="left:124px;top:69px;color:#000;transform:scaleX(0.931)">=</span><span class="ch" style="left:130px;top:69px;color:#000">u</span>
<div class="cb" style="left:8px;top:85px"><svg width="11" height="11" viewBox="0 0 11 11"><path d="M2,5 L4,7.5 L9,2.5" fill="none" stroke="#000" stroke-width="2.2"/></svg></div>
<span class="ch" style="left:22px;top:83px;color:#000">2</span><span class="ch" style="left:28px;top:83px;color:#000;transform:scaleX(0.727)">D</span><span class="ch" style="left:40px;top:83px;color:#000;transform:scaleX(0.787)">C</span><span class="ch" style="left:46px;top:83px;color:#000">u</span><span class="ch" style="left:52px;top:83px;color:#000">r</span><span class="ch" style="left:58px;top:83px;color:#000">v</span><span class="ch" style="left:64px;top:83px;color:#000">e</span><span class="ch" style="left:82px;top:83px;color:#000">y</span><span class="ch" style="left:88px;top:83px;color:#000;transform:scaleX(0.931)">=</span><span class="ch" style="left:94px;top:83px;color:#000">2</span>
<div class="cb" style="left:8px;top:99px"><svg width="11" height="11" viewBox="0 0 11 11"><path d="M2,5 L4,7.5 L9,2.5" fill="none" stroke="#000" stroke-width="2.2"/></svg></div>
<span class="ch" style="left:22px;top:97px;color:#000;transform:scaleX(0.944)">P</span><span class="ch" style="left:28px;top:97px;color:#000">o</span><span class="ch" style="left:34px;top:97px;color:#000">i</span><span class="ch" style="left:40px;top:97px;color:#000">n</span><span class="ch" style="left:46px;top:97px;color:#000">t</span><span class="ch" style="left:64px;top:97px;color:#000">x</span><span class="ch" style="left:70px;top:97px;color:#000;transform:scaleX(0.931)">=</span><span class="ch" style="left:76px;top:97px;color:#000">1</span><span class="ch" style="left:82px;top:97px;color:#000">.</span><span class="ch" style="left:88px;top:97px;color:#000">5</span><span class="ch" style="left:94px;top:97px;color:#000">,</span><span class="ch" style="left:106px;top:97px;color:#000">y</span><span class="ch" style="left:112px;top:97px;color:#000;transform:scaleX(0.931)">=</span><span class="ch" style="left:118px;top:97px;color:#000">2</span>
<div style="position:absolute;left:21px;top:112px;width:281px;height:14px;background:#316AC5"></div>
<div class="cb" style="left:8px;top:113px"><svg width="11" height="11" viewBox="0 0 11 11"><path d="M2,5 L4,7.5 L9,2.5" fill="none" stroke="#000" stroke-width="2.2"/></svg></div>
<span class="ch" style="left:22px;top:111px;color:#fff;transform:scaleX(0.944)">P</span><span class="ch" style="left:28px;top:111px;color:#fff">a</span><span class="ch" style="left:34px;top:111px;color:#fff">r</span><span class="ch" style="left:40px;top:111px;color:#fff">a</span><span class="ch" style="left:46px;top:111px;color:#fff">b</span><span class="ch" style="left:52px;top:111px;color:#fff">o</span><span class="ch" style="left:58px;top:111px;color:#fff">l</span><span class="ch" style="left:64px;top:111px;color:#fff">a</span><span class="ch" style="left:82px;top:111px;color:#fff">(</span><span class="ch" style="left:88px;top:111px;color:#fff">y</span><span class="ch" style="left:94px;top:111px;color:#fff">-</span><span class="ch" style="left:100px;top:111px;color:#fff">2</span><span class="ch" style="left:106px;top:111px;color:#fff">)</span><span class="ch" style="left:112px;top:111px;color:#fff">^</span><span class="ch" style="left:118px;top:111px;color:#fff">2</span><span class="ch" style="left:124px;top:111px;color:#fff;transform:scaleX(0.931)">=</span><span class="ch" style="left:130px;top:111px;color:#fff">2</span><span class="ch" style="left:136px;top:111px;color:#fff">*</span><span class="ch" style="left:142px;top:111px;color:#fff">1</span><span class="ch" style="left:148px;top:111px;color:#fff">*</span><span class="ch" style="left:154px;top:111px;color:#fff">(</span><span class="ch" style="left:160px;top:111px;color:#fff">x</span><span class="ch" style="left:166px;top:111px;color:#fff">-</span><span class="ch" style="left:172px;top:111px;color:#fff">1</span><span class="ch" style="left:178px;top:111px;color:#fff">)</span>
<!-- left bottom pane -->
<div class="a" style="left:4px;top:395px;width:300px;height:85px;border-top:1px solid #ACA899;border-left:1px solid #ACA899;border-right:1px solid #fff"></div>
<div class="a" style="left:5px;top:396px;width:298px;height:84px;border-top:1px solid #716F64;border-left:1px solid #716F64;border-right:1px solid #F1EFE2;background:#fff"></div>
<div class="a" style="left:285px;top:397px;width:17px;height:83px;background:linear-gradient(90deg,#F3F3EE,#FDFDFA 40%,#F4F4EF)"></div>
<div class="a" style="left:287px;top:398px;width:13px;height:16px;background:#EEEDE5;border:1px solid #E0DED3;border-radius:1px"></div>
<svg class="a" style="left:287px;top:398px" width="13" height="16"><path d="M3,10 L6.5,6.5 L10,10" fill="none" stroke="#B9B8AE" stroke-width="2"/></svg>
<!-- right pane -->
<div class="a" style="left:308px;top:68px;width:542px;height:412px;border-top:1px solid #ACA899;border-left:1px solid #ACA899"></div>
<div class="a" style="left:309px;top:69px;width:541px;height:411px;border-top:1px solid #716F64;border-left:1px solid #716F64;background:#fff"></div>
<svg class="a" style="left:310px;top:70px" width="540" height="410" viewBox="310 70 540 410">
<rect x="490" y="316" width="156" height="2" fill="#60DAA4"/>
<rect x="522" y="235" width="1" height="164" fill="#F0A4AC"/><rect x="523" y="235" width="1" height="164" fill="#983848"/>
<rect x="439" y="357" width="279" height="1" fill="#000"/>
<g shape-rendering="crispEdges" fill="#000"><rect x="717" y="353" width="1" height="9"/><rect x="718" y="353" width="1" height="9"/><rect x="719" y="354" width="1" height="7"/><rect x="720" y="355" width="1" height="5"/><rect x="721" y="356" width="1" height="3"/><rect x="722" y="357" width="1" height="1"/></g>
<rect x="512" y="170" width="1" height="297" fill="#000"/>
<g shape-rendering="crispEdges" fill="#000"><rect x="511" y="166" width="3" height="1"/><rect x="510" y="167" width="5" height="1"/><rect x="509" y="168" width="7" height="1"/><rect x="508" y="169" width="9" height="1"/></g>
<rect x="467" y="352" width="1" height="5" fill="#000"/>
<rect x="476" y="354" width="1" height="3" fill="#000"/>
<rect x="485" y="354" width="1" height="3" fill="#000"/>
<rect x="494" y="354" width="1" height="3" fill="#000"/>
<rect x="503" y="354" width="1" height="3" fill="#000"/>
<rect x="520" y="354" width="1" height="3" fill="#000"/>
<rect x="529" y="354" width="1" height="3" fill="#000"/>
<rect x="538" y="354" width="1" height="3" fill="#000"/>
<rect x="547" y="354" width="1" height="3" fill="#000"/>
<rect x="556" y="352" width="1" height="5" fill="#000"/>
<rect x="565" y="354" width="1" height="3" fill="#000"/>
<rect x="574" y="354" width="1" height="3" fill="#000"/>
<rect x="583" y="354" width="1" height="3" fill="#000"/>
<rect x="592" y="354" width="1" height="3" fill="#000"/>
<rect x="601" y="352" width="1" height="5" fill="#000"/>
<rect x="610" y="354" width="1" height="3" fill="#000"/>
<rect x="619" y="354" width="1" height="3" fill="#000"/>
<rect x="627" y="354" width="1" height="3" fill="#000"/>
<rect x="636" y="354" width="1" height="3" fill="#000"/>
<rect x="645" y="352" width="1" height="5" fill="#000"/>
<rect x="654" y="354" width="1" height="3" fill="#000"/>
<rect x="663" y="354" width="1" height="3" fill="#000"/>
<rect x="672" y="354" width="1" height="3" fill="#000"/>
<rect x="681" y="354" width="1" height="3" fill="#000"/>
<rect x="690" y="352" width="1" height="5" fill="#000"/>
<rect x="513" y="439" width="6" height="1" fill="#000"/>
<rect x="513" y="430" width="3" height="1" fill="#000"/>
<rect x="513" y="422" width="3" height="1" fill="#000"/>
<rect x="513" y="414" width="3" height="1" fill="#000"/>
<rect x="513" y="406" width="3" height="1" fill="#000"/>
<rect x="513" y="398" width="6" height="1" fill="#000"/>
<rect x="513" y="390" width="3" height="1" fill="#000"/>
<rect x="513" y="381" width="3" height="1" fill="#000"/>
<rect x="513" y="373" width="3" height="1" fill="#000"/>
<rect x="513" y="365" width="3" height="1" fill="#000"/>
<rect x="513" y="349" width="3" height="1" fill="#000"/>
<rect x="513" y="341" width="3" height="1" fill="#000"/>
<rect x="513" y="333" width="3" height="1" fill="#000"/>
<rect x="513" y="324" width="3" height="1" fill="#000"/>
<rect x="513" y="316" width="6" height="1" fill="#000"/>
<rect x="513" y="308" width="3" height="1" fill="#000"/>
<rect x="513" y="300" width="3" height="1" fill="#000"/>
<rect x="513" y="292" width="3" height="1" fill="#000"/>
<rect x="513" y="284" width="3" height="1" fill="#000"/>
<rect x="513" y="275" width="6" height="1" fill="#000"/>
<rect x="513" y="267" width="3" height="1" fill="#000"/>
<rect x="513" y="259" width="3" height="1" fill="#000"/>
<rect x="513" y="251" width="3" height="1" fill="#000"/>
<rect x="513" y="243" width="3" height="1" fill="#000"/>
<rect x="513" y="235" width="6" height="1" fill="#000"/>
<rect x="513" y="227" width="3" height="1" fill="#000"/>
<rect x="513" y="218" width="3" height="1" fill="#000"/>
<rect x="513" y="210" width="3" height="1" fill="#000"/>
<rect x="513" y="202" width="3" height="1" fill="#000"/>
<rect x="513" y="194" width="6" height="1" fill="#000"/>
<text x="469.5" y="368" text-anchor="middle" font-family="Liberation Sans" font-size="12" fill="#000">-2</text>
<text x="558.5" y="368" text-anchor="middle" font-family="Liberation Sans" font-size="12" fill="#000">2</text>
<text x="603.5" y="368" text-anchor="middle" font-family="Liberation Sans" font-size="12" fill="#000">4</text>
<text x="647.5" y="368" text-anchor="middle" font-family="Liberation Sans" font-size="12" fill="#000">6</text>
<text x="692.5" y="368" text-anchor="middle" font-family="Liberation Sans" font-size="12" fill="#000">8</text>
<text x="509" y="441.5" text-anchor="end" font-family="Liberation Sans" font-size="12" fill="#000">-4</text>
<text x="509" y="400.5" text-anchor="end" font-family="Liberation Sans" font-size="12" fill="#000">-2</text>
<text x="509" y="318.5" text-anchor="end" font-family="Liberation Sans" font-size="12" fill="#000">2</text>
<text x="509" y="277.5" text-anchor="end" font-family="Liberation Sans" font-size="12" fill="#000">4</text>
<text x="509" y="237.5" text-anchor="end" font-family="Liberation Sans" font-size="12" fill="#000">6</text>
<text x="509" y="196.5" text-anchor="end" font-family="Liberation Sans" font-size="12" fill="#000">8</text>
<text x="511" y="368" text-anchor="end" font-family="Liberation Sans" font-size="12" fill="#000">0</text>
<text x="718" y="373" font-family="Liberation Sans" font-size="11" fill="#000">X</text>
<text x="498" y="170" font-family="Liberation Sans" font-size="12" fill="#000">Y</text>
<path d="M624.00,374.38 L619.60,372.94 L615.30,371.50 L611.12,370.06 L607.05,368.62 L603.09,367.18 L599.25,365.74 L595.51,364.30 L591.89,362.85 L588.38,361.41 L584.98,359.97 L581.69,358.53 L578.51,357.09 L575.44,355.65 L572.49,354.21 L569.64,352.77 L566.91,351.33 L564.29,349.88 L561.78,348.44 L559.39,347.00 L557.10,345.56 L554.93,344.12 L552.86,342.68 L550.91,341.24 L549.07,339.80 L547.34,338.36 L545.73,336.92 L544.22,335.47 L542.83,334.03 L541.55,332.59 L540.38,331.15 L539.32,329.71 L538.37,328.27 L537.53,326.83 L536.81,325.39 L536.19,323.95 L535.69,322.50 L535.30,321.06 L535.02,319.62 L534.86,318.18 L534.80,316.74 L534.86,315.30 L535.02,313.86 L535.30,312.42 L535.69,310.98 L536.19,309.53 L536.81,308.09 L537.53,306.65 L538.37,305.21 L539.32,303.77 L540.38,302.33 L541.55,300.89 L542.83,299.45 L544.22,298.01 L545.73,296.56 L547.34,295.12 L549.07,293.68 L550.91,292.24 L552.86,290.80 L554.93,289.36 L557.10,287.92 L559.39,286.48 L561.78,285.04 L564.29,283.60 L566.91,282.15 L569.64,280.71 L572.49,279.27 L575.44,277.83 L578.51,276.39 L581.69,274.95 L584.97,273.51 L588.38,272.07 L591.89,270.63 L595.51,269.18 L599.25,267.74 L603.09,266.30 L607.05,264.86 L611.12,263.42 L615.30,261.98 L619.60,260.54 L624.00,259.10" fill="none" stroke="#0A0AB0" stroke-width="2.8"/>
<rect x="543" y="315" width="5" height="4" fill="#C01818"/>
<rect x="660" y="192" width="16" height="2" fill="#C01818"/>
<rect x="660" y="207" width="16" height="2" fill="#5EDC9E"/>
<rect x="660" y="222" width="16" height="2" fill="#000090"/>
<text x="686" y="196" font-family="Liberation Sans" font-size="12" letter-spacing="1.4" fill="#111">x=0.5, y=u</text>
<text x="686" y="211" font-family="Liberation Sans" font-size="12" letter-spacing="1.4" fill="#111">y=2</text>
<text x="686" y="226" font-family="Liberation Sans" font-size="12" letter-spacing="1.4" fill="#111">y=sqr(2*(1)*(x-(1)))+(2)</text>
</svg>
<div class="a" style="left:0;top:0;width:1px;height:480px;background:#0022C4"></div><div class="a" style="left:1px;top:0;width:1px;height:480px;background:#0A34DA"></div><div class="a" style="left:2px;top:0;width:1px;height:480px;background:#2C5EF2"></div><div class="a" style="left:3px;top:0;width:1px;height:480px;background:#1E4CC4"></div><div class="a" style="left:4px;top:0;width:1px;height:68px;background:#E0ECF8"></div>
<div class="a" style="left:849px;top:0;width:1px;height:480px;background:#F8F8F2"></div><div class="a" style="left:850px;top:0;width:1px;height:480px;background:#2E5CC8"></div><div class="a" style="left:851px;top:0;width:1px;height:480px;background:#0A3AC8"></div><div class="a" style="left:852px;top:0;width:1px;height:480px;background:#0022A4"></div><div class="a" style="left:853px;top:0;width:1px;height:480px;background:#001890"></div>
<div class="a" style="left:4px;top:68px;width:1px;height:412px;background:#A4B2D2"></div>
</body></html>
